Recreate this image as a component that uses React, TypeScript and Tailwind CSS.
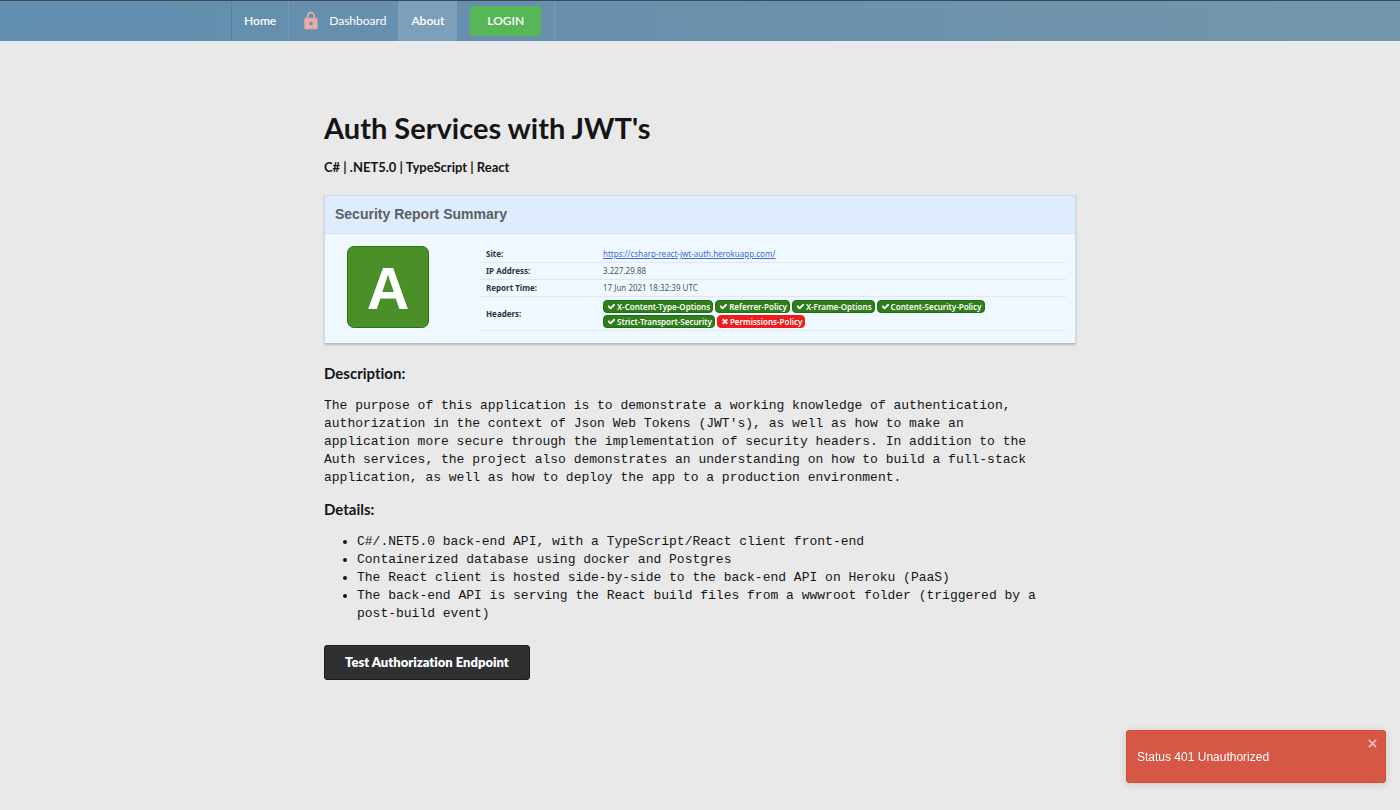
import { useState } from "react";
import type { ReactNode } from "react";
import { FaCheck, FaTimes } from "react-icons/fa";
import { MdLock } from "react-icons/md";

const HEADERS = [
  { name: "X-Content-Type-Options", ok: true },
  { name: "Referrer-Policy", ok: true },
  { name: "X-Frame-Options", ok: true },
  { name: "Content-Security-Policy", ok: true },
  { name: "Strict-Transport-Security", ok: true },
  { name: "Permissions-Policy", ok: false },
];

const DETAILS = [
  "C#/.NET5.0 back-end API, with a TypeScript/React client front-end",
  "Containerized database using docker and Postgres",
  "The React client is hosted side-by-side to the back-end API on Heroku (PaaS)",
  "The back-end API is serving the React build files from a wwwroot folder (triggered by a post-build event)",
];

function NavBar() {
  return (
    <header className="border-t border-[#3c4a57] bg-linear-to-r from-[#628eb0] via-[#6a90ac] to-[#7396aa] text-white">
      <nav className="mx-auto flex h-10 max-w-[938px] items-stretch border-l border-black/10 text-[12px]">
        <a href="#home" className="flex items-center border-r border-white/10 px-3 font-semibold">
          Home
        </a>
        <a href="#dashboard" className="flex items-center gap-2 px-3">
          <MdLock className="size-5 text-[#e8a9a9]" />
          Dashboard
        </a>
        <a href="#about" className="flex items-center bg-white/15 px-[13px] font-semibold">
          About
        </a>
        <div className="flex items-center border-r border-white/10 px-[13px]">
          <button type="button" className="h-[30px] rounded-[3px] bg-[#57b757] px-[17px] font-semibold">
            LOGIN
          </button>
        </div>
      </nav>
    </header>
  );
}

function HeaderBadge({ name, ok }: { name: string; ok: boolean }) {
  return (
    <span
      className={`flex h-[13px] items-center gap-0.5 rounded-[4px] border pr-0.5 pl-1 text-[8px] leading-none font-semibold text-white ${
        ok ? "border-[#1f6f12] bg-[#2f7d1b]" : "border-[#f51b1b] bg-[#ee1c1c]"
      }`}
    >
      {ok ? (
        <FaCheck className="size-[7px]" strokeWidth={50} />
      ) : (
        <FaTimes className="h-[7px] w-[6px]" strokeWidth={50} />
      )}
      {name}
    </span>
  );
}

function Row({ label, children }: { label: string; children: ReactNode }) {
  return (
    <tr className="border-b border-[#e3e7ea]">
      <th scope="row" className="w-[123px] py-0 pl-[6px] text-left font-bold text-[#333]">
        {label}
      </th>
      <td className="p-0 text-[#555]">{children}</td>
    </tr>
  );
}

function SecurityReport() {
  return (
    <section className="mt-[18px] border border-[#d3dbe2] border-b-[#b4bcc2] bg-[#f0f8ff] shadow-[0_1px_2px_rgba(0,0,0,0.2)]">
      <h2 className="border-b border-[#d6e0e8] bg-[#dfecfd] px-[10px] font-['Liberation_Sans',sans-serif] text-[14px] leading-[37px] font-bold text-[#5c5f63]">
        Security Report Summary
      </h2>
      <div className="flex items-start gap-[51px] pt-3 pr-[9px] pb-3 pl-[22px] font-['Noto_Sans','Open_Sans',sans-serif]">
        <div className="flex size-[82px] shrink-0 items-center justify-center rounded-[7px] border border-[#2a750f] bg-[#4b8f29] pt-1 font-['Liberation_Sans',sans-serif] text-[59px] leading-none font-bold text-white">
          A
        </div>
        <table className="grow border-collapse text-[8px] leading-4">
          <tbody>
            <Row label="Site:">
              <a href="https://csharp-react-jwt-auth.herokuapp.com/" className="text-[#4169d8] underline">
                https://csharp-react-jwt-auth.herokuapp.com/
              </a>
            </Row>
            <Row label="IP Address:">3.227.29.88</Row>
            <Row label="Report Time:">17 Jun 2021 18:32:39 UTC</Row>
            <Row label="Headers:">
              <div className="flex max-w-[400px] flex-wrap gap-0.5 pt-[3px] pb-[2px]">
                {HEADERS.map((h) => (
                  <HeaderBadge key={h.name} name={h.name} ok={h.ok} />
                ))}
              </div>
            </Row>
          </tbody>
        </table>
      </div>
    </section>
  );
}

function Toast({ onClose }: { onClose: () => void }) {
  return (
    <div
      role="alert"
      className="fixed right-[14px] bottom-[27px] flex h-[53px] w-[260px] items-center rounded-[3px] border border-[#dc4a30] bg-[#d65745] px-[10px] font-['Liberation_Sans',sans-serif] text-[12px] text-white shadow-[0_1px_8px_rgba(0,0,0,0.15)]"
    >
      Status 401 Unauthorized
      <button type="button" aria-label="Close" onClick={onClose} className="absolute top-2 right-2 text-[#efc0b8]">
        <svg viewBox="0 0 10 10" className="size-[9px]" fill="none" stroke="currentColor" strokeWidth="1.8">
          <path d="M1 1 9 9M9 1 1 9" />
        </svg>
      </button>
    </div>
  );
}

export default function App() {
  const [toastOpen, setToastOpen] = useState(true);
  return (
    <div className="min-h-screen bg-[#e9e9e9] font-[Lato,sans-serif] text-[#151515] [font-variant-ligatures:none]">
      <NavBar />
      <main className="mx-auto max-w-[752px] pt-[68px]">
        <h1 className="text-[29px] leading-[38px] font-bold">Auth Services with JWT's</h1>
        <p className="mt-[10px] text-[13px] leading-5 font-bold">C# | .NET5.0 | TypeScript | React</p>
        <SecurityReport />
        <h3 className="mt-[19px] text-[15px] leading-5 font-bold">Description:</h3>
        <p className="mt-[14px] pr-5 font-['Liberation_Mono',monospace] text-[13px] leading-[18px]">
          The purpose of this application is to demonstrate a working knowledge of authentication, authorization in
          the context of Json Web Tokens (JWT's), as well as how to make an application more secure through the
          implementation of security headers. In addition to the Auth services, the project also demonstrates an
          understanding on how to build a full-stack application, as well as how to deploy the app to a production
          environment.
        </p>
        <h3 className="mt-3 text-[15px] leading-5 font-bold">Details:</h3>
        <ul className="mt-[14px] list-disc pr-5 pl-[33px] font-['Liberation_Mono',monospace] text-[13px] leading-[18px]">
          {DETAILS.map((d) => (
            <li key={d}>{d}</li>
          ))}
        </ul>
        <button
          type="button"
          className="mt-[22px] h-[35px] rounded-[3px] border border-[#1b1c1d] bg-[#2e3032] px-5 text-[13px] font-extrabold text-white"
        >
          Test Authorization Endpoint
        </button>
      </main>
      {toastOpen && <Toast onClose={() => setToastOpen(false)} />}
    </div>
  );
}
